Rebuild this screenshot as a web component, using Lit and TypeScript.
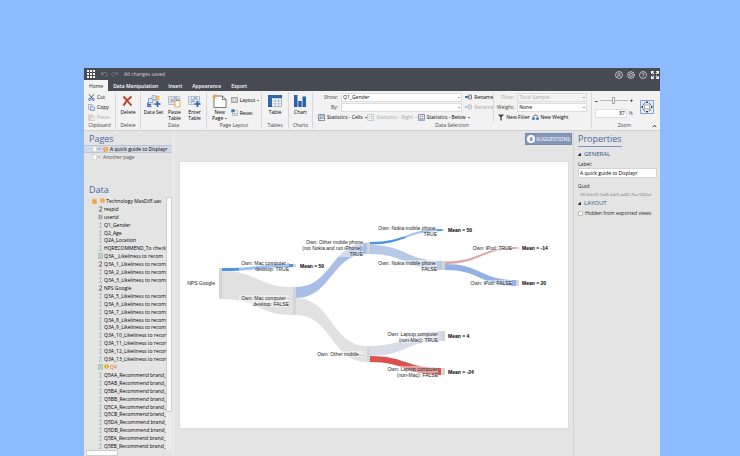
import { LitElement, html, css, svg, TemplateResult } from "lit";
import { customElement } from "lit/decorators.js";

const ic = (w: number, h: number, body: unknown) =>
  html`<svg width=${w} height=${h} viewBox="0 0 ${w} ${h}" aria-hidden="true">${body}</svg>`;

const plus = (x: number, y: number) =>
  svg`<path d="M${x} ${y - 3}v6M${x - 3} ${y}h6" stroke="#2660ab" stroke-width="1.6"/>`;
const gridBody = svg`<path d="M.5 1.500h11v8h-11z" fill="#eef1f5" stroke="#a3abb8" stroke-width=".7"/>
  <path d="M.5 4.200h11M.5 6.800h11M3.300 1.500v8M6 1.500v8M8.800 1.500v8" stroke="#a3abb8" stroke-width=".6"/>
  <path d="M3.500 4.500h2.300v2.200H3.500zM6.200 2h2.400v2H6.200z" fill="#8db0dc"/>`;

const icons = {
  apps: ic(8, 8, svg`<path d="M0 0h2v2H0zM3 0h2v2H3zM6 0h2v2H6zM0 3h2v2H0zM3 3h2v2H3zM6 3h2v2H6zM0 6h2v2H0zM3 6h2v2H3zM6 6h2v2H6z" fill="#fff"/>`),
  undo: ic(7, 6, svg`<path d="M.7 1v2.300H3M.9 3.200C2 1 6.300.8 6.300 3.300 6.300 4.600 5.200 5.200 4 5.200" fill="none" stroke="#8d9199" stroke-width=".8"/>`),
  redo: ic(7, 6, svg`<path d="M6.300 1v2.300H4M6.100 3.200C5 1 .7.8.7 3.300.7 4.600 1.800 5.200 3 5.200" fill="none" stroke="#7b7f87" stroke-width=".8"/>`),
  user: ic(8, 8, svg`<circle cx="4" cy="4" r="3.500" fill="none" stroke="#d4d6da" stroke-width=".8"/><circle cx="4" cy="3.200" r="1.200" fill="none" stroke="#d4d6da" stroke-width=".7"/><path d="M2 6.200c.4-2 3.600-2 4 0" fill="none" stroke="#d4d6da" stroke-width=".8"/>`),
  gear: ic(8, 8, svg`<circle cx="4" cy="4" r="3.200" fill="none" stroke="#d4d6da" stroke-width="1.100" stroke-dasharray="1.600 .4"/><circle cx="4" cy="4" r="1.500" fill="none" stroke="#d4d6da" stroke-width=".8"/>`),
  help: ic(8, 8, svg`<circle cx="4" cy="4" r="3.500" fill="none" stroke="#d4d6da" stroke-width=".8"/><path d="M2.900 3.200c0-1.500 2.300-1.400 2.200 0C5.100 4 4 3.900 4 4.900M4 5.500v.8" fill="none" stroke="#d4d6da" stroke-width=".8"/>`),
  full: ic(8, 8, svg`<path d="M.5 2.800V.5h2.300M5.200.5h2.300v2.300M7.500 5.200v2.300H5.200M2.800 7.500H.5V5.200M.7.700l2.300 2.300M7.300.7L5 3M7.300 7.300L5 5M.7 7.300L3 5" fill="none" stroke="#fff" stroke-width="1.100"/>`),
  cut: ic(7, 7, svg`<path d="M1 .3l3.700 4.500M5.800.3L2.300 4.800" stroke="#444" stroke-width=".9"/><circle cx="1.700" cy="5.400" r="1.100" fill="none" stroke="#2f6db5" stroke-width=".9"/><circle cx="5.200" cy="5.400" r="1.100" fill="none" stroke="#2f6db5" stroke-width=".9"/>`),
  copy: ic(7, 7, svg`<path d="M.5.5h3l1 1v3.700h-4z" fill="#fff" stroke="#8a8f98" stroke-width=".7"/><path d="M2.500 2h2.700l1.200 1.200v3.400H2.500z" fill="#d3e2f5" stroke="#5483bd" stroke-width=".7"/>`),
  paste: ic(7, 7, svg`<path d="M.7 1h4v5.300h-4z" fill="#eddccb" stroke="#cbbba9" stroke-width=".7"/><path d="M3 3h3.300v3.600H3z" fill="#f7f7f7" stroke="#bbb" stroke-width=".6"/>`),
  del: ic(11, 12, svg`<path d="M1.500 1.500C4 4 7 8 9.500 10.500M9.500 1.500C6.500 3.500 3 7.500 1.500 10.500" fill="none" stroke="#c23a26" stroke-width="1.900"/>`),
  dataset: ic(14, 13, svg`<path d="M1.500 3.500h4.500v4H1.500z" fill="#dfe8f4" stroke="#6b93c6" stroke-width=".8"/><path d="M5 .6h4v4H5z" fill="#cddcf0" stroke="#8ba8cf" stroke-width=".7"/><path d="M9 1h3.500v4H9z" fill="#f0b95a"/><path d="M6 5.500h4v4H6z" fill="#e9edf3" stroke="#9aa5b5" stroke-width=".6"/><path d="M.8 12V7.500M.8 8.500l3.500 3.500M1 12l3-3" stroke="#2660ab" stroke-width="1.100"/>${plus(10.500, 9)}`),
  pasteTable: ic(13, 13, svg`${gridBody}<path d="M7 5.500h5v6.500H7z" fill="#fff" stroke="#e6a94c" stroke-width="1"/><path d="M8.300 4.700h2.400v1.300H8.300z" fill="#8a7b61"/>`),
  enterTable: ic(13, 13, svg`${gridBody}${plus(9.500, 9)}`),
  page: ic(15, 14, svg`<path d="M2 2h8.500L14 5.500v8H2z" fill="#fff" stroke="#555" stroke-width=".8"/><path d="M10.500 2v3.500H14" fill="none" stroke="#555" stroke-width=".8"/><path d="M2.500 0v5M0 2.500h5M.8.800l3.400 3.400M4.200.8L.8 4.200" stroke="#e9a43c" stroke-width=".8"/>`),
  layout: ic(7, 6, svg`<path d="M.4.400h6.200v5.200H.4z" fill="#fff" stroke="#777" stroke-width=".7"/><path d="M1 1.800h5M1.200 3.200h2M3.900 3.200h2M1.200 4.500h2M3.900 4.500h2" stroke="#8b98ab" stroke-width=".7"/>`),
  reset: ic(7, 7, svg`<path d="M1.500 1.500h5v5h-5z" fill="#fff" stroke="#999" stroke-width=".6"/><path d="M.3.300h3.400v3H.3z" fill="#3f76b9"/><path d="M2.500 4.800h3" stroke="#3f76b9" stroke-width=".8"/>`),
  table: ic(14, 12, svg`<path d="M.4.400h13.200v11.200H.4z" fill="#fff" stroke="#8494ab" stroke-width=".7"/><path d="M0 0h14v3.300H4V12H0z" fill="#2662a8"/><path d="M4 6h10M4 8.800h10M7.300 3v9M10.600 3v9" stroke="#9aa8bd" stroke-width=".7"/><path d="M0 3.300h4M0 6.200h4M0 9h4M4 0v3M7.300 0v3M10.600 0v3" stroke="#6c97cb" stroke-width=".4"/>`),
  chart: ic(12, 12, svg`<path d="M0 0h3.500v12H0zM4.300 6h3.400v6H4.300zM8.500 1.500H12V12H8.500z" fill="#2662b0"/>`),
  stat: ic(7, 7, svg`<path d="M.5.500h6v6h-6z" fill="#fff" stroke="#5a6472" stroke-width=".7"/><path d="M2 1h4v3.500H2z" fill="#a9c6ea"/><path d="M.5 4.600h6M2 .5v6" stroke="#7a8695" stroke-width=".6"/>`),
  statDim: ic(7, 7, svg`<path d="M.5.500h6v6h-6z" fill="#f7f8fa" stroke="#b6bbc4" stroke-width=".7"/><path d="M4.600 1v5.500M.5 2.500h6M.5 4.500h6" stroke="#c3cad5" stroke-width=".6"/>`),
  statBelow: ic(7, 7, svg`<path d="M.5.500h6v6h-6z" fill="#fff" stroke="#5a6472" stroke-width=".7"/><path d="M.5 4.600h6v1.900h-6z" fill="#a9c6ea"/><path d="M.5 2.500h6M.5 4.600h6M2.500.5v6M4.500.5v6" stroke="#8a96a6" stroke-width=".5"/>`),
  rename: ic(7, 6, svg`<path d="M0 2h3.500v2H0z" fill="#3a73bb"/><path d="M3.500.7h1M4 .7v4.600M3.500 5.300h1M5.200 1.200h1.300v3.600H5.200" fill="none" stroke="#444" stroke-width=".7"/>`),
  renameDim: ic(7, 6, svg`<path d="M0 2h3.500v2H0z" fill="#b3c8e4"/><path d="M3.500.7h1M4 .7v4.600M3.500 5.300h1M5.200 1.200h1.300v3.600H5.200" fill="none" stroke="#aaa" stroke-width=".7"/>`),
  filter: ic(6, 7, svg`<path d="M0 .5h6L3.700 3.200V7L2.300 6V3.200z" fill="#4a4a4a"/>`),
  weight: ic(7, 7, svg`<path d="M1 3C2 .4 5 .4 6 3" fill="none" stroke="#444" stroke-width=".8"/><path d="M.2 3.500h2.600v2.200H.2zM4.200 3.500h2.600v2.200H4.200z" fill="#2f6db5"/>`),
  fit: ic(14, 14, svg`<path d="M.5.500h13v13H.5z" fill="#e6effa" stroke="#7ea3d4"/><path d="M4.500 5h5v4h-5z" fill="#fff" stroke="#888" stroke-width=".7"/><path d="M7 1l1.600 2H5.400zM7 13l1.600-2H5.400zM1 7l2-1.600v3.200zM13 7l-2-1.600v3.200z" fill="#2b3442"/><path d="M3 5.200C3.300 4 4 3.300 5 3M9 3c1 .3 1.700 1 2 2.200M11 8.800C10.700 10 10 10.700 9 11M5 11C4 10.700 3.300 10 3 8.800" fill="none" stroke="#55606f" stroke-width=".9"/>`),
  db: ic(5, 6, svg`<path d="M.3 1v4c0 1.200 4.400 1.200 4.400 0V1z" fill="#f2a23a"/><ellipse cx="2.500" cy="1.100" rx="2.200" ry=".8" fill="#f8c480"/>`),
  warn: ic(5, 5, svg`<circle cx="2.500" cy="2.500" r="2.300" fill="#f0952a"/><path d="M2.500 1.200v1.400M2.500 3.200v.8" stroke="#fff" stroke-width=".8"/>`),
  doc: ic(9, 6, svg`<path d="M.9.300h2.500l1.200 1.200v4.200H.9z" fill="#fff" stroke="#b9b9b9" stroke-width=".5"/><path d="M6 2.500h2.400L7.200 3.900z" fill="#888"/>`),
  num: ic(5, 6, svg`<path d="M1.200 1.600C1.700.3 3.900.5 3.700 2 3.600 3 1.800 4 1.400 5.200h2.600" fill="none" stroke="#444" stroke-width=".8"/>`),
  id: ic(5, 6, svg`<path d="M.8 1.200h1.200v1.500H.8zM2.900 1.200h1.200v1.500H2.900zM.8 3.500h1.200V5H.8zM2.900 3.500h1.200V5H2.900z" fill="none" stroke="#777" stroke-width=".5"/>`),
  cat: ic(5, 6, svg`<circle cx="2.500" cy="1.100" r=".9" fill="#7fbb8a"/><circle cx="2.500" cy="3.100" r=".8" fill="#a9b4c2"/><path d="M1 5.200h3" stroke="#9ab3c4" stroke-width="1"/>`),
  multi: ic(5, 6, svg`<path d="M.3.400h4.400v5.200H.3z" fill="#d2e2d2" stroke="#86b48c" stroke-width=".6"/><path d="M1 1l3 4M4 1L1 5" stroke="#86a9a0" stroke-width=".6"/>`),
};

type Kind = "num" | "id" | "cat" | "multi";
const variables: [Kind, string][] = [
  ["num", "respid"], ["id", "userid"], ["cat", "Q1_Gender"], ["cat", "Q2_Age"], ["cat", "Q2A_Location"],
  ["cat", "HQRECOMMEND_To check"], ["multi", "Q3A__Likeliness to recom"],
  ["num", "Q3A_1_Likeliness to recom"], ["cat", "Q3A_2_Likeliness to recom"],
  ["cat", "Q3A_3_Likeliness to recom"], ["num", "NPS Google"],
  ...[5, 6, 7, 8, 9].map((n): [Kind, string] => ["cat", `Q3A_${n}_Likeliness to recom`]),
  ...[10, 11, 12, 13].map((n): [Kind, string] => ["cat", `Q3A_${n}_Likeliness to recor`]),
  ["multi", "Q4"],
  ...["AA", "AB", "BA", "BB", "CA", "CB", "DA", "DB", "EA", "EB"].map((n): [Kind, string] => ["cat", `Q5${n}_Recommend brand_`]),
];

/* Sankey links: x0, top0, bottom0, x1, top1, bottom1, colour */
const links: [number, number, number, number, number, number, string][] = [
  [42, 109, 137, 113, 125, 153, "#e1e1e1"],
  [42, 106, 109, 113, 102, 105, "#4d94e4"],
  [116, 136, 153, 187, 184, 200, "#e1e1e1"],
  [116, 125, 136, 187, 81, 92, "#a9bee6"],
  [190, 80, 82.500, 262, 67, 69, "#4d94e4"],
  [190, 83, 92, 262, 99, 108, "#b8c9e8"],
  [265, 99.500, 102, 336, 85, 87, "#e0a8a5"],
  [265, 102, 108, 336, 118, 124, "#93b2e3"],
  [190, 184, 194, 261, 169, 179, "#d7dce7"],
  [190, 194, 200, 261, 206, 213, "#d8534e"],
];
/* x, y, width, height */
const nodes = [
  [39, 106, 3, 31], [113, 102, 3, 3], [113, 125, 3, 28], [187, 80, 3, 12], [187, 184, 3, 16],
  [262, 67, 2, 2], [262, 99, 3, 9], [336, 85, 3, 2], [336, 118, 3, 6], [261, 169, 4, 10], [261, 206, 4, 7],
];
/* right edge, first centre line, box width, lines */
const nodeLabels: [number, number, number, string[]][] = [
  [35, 121, 0, ["NPS Google"]],
  [109, 101, 50, ["Own: Mac computer -", "desktop: TRUE"]],
  [109, 136, 50, ["Own: Mac computer -", "desktop: FALSE"]],
  [183, 80, 64, ["Own: Other mobile phone", "(not Nokia and not iPhone):", "TRUE"]],
  [183, 192, 48, ["Own: Other mobile..."]],
  [257, 66, 61, ["Own: Nokia mobile phone:", "TRUE"]],
  [257, 101, 61, ["Own: Nokia mobile phone:", "FALSE"]],
  [332, 86, 42, ["Own: iPod: TRUE"]],
  [332, 121, 44, ["Own: iPod: FALSE"]],
  [258, 172, 53, ["Own: Laptop computer", "(non-Mac): TRUE"]],
  [258, 207, 53, ["Own: Laptop computer", "(non-Mac): FALSE"]],
];
const means: [number, number, string][] = [
  [120, 104, "50"], [268, 68, "50"], [342, 86, "-14"], [342, 121, "20"], [268, 174, "4"], [268, 210, "-24"],
];

@customElement("sankey-chart")
export class SankeyChart extends LitElement {
  static styles = css`
    :host { display: block; background: #fff; box-shadow: 0 0 1px #bbb; }
    svg { display: block; width: 100%; }
    text { font: 5px "Liberation Sans", Arial, sans-serif; fill: #222; }
    .end { text-anchor: end; }
    .mean { font-weight: bold; fill: #000; }
    .halo { fill: #fff; fill-opacity: 0.45; }
    .node { fill: #d5d5d5; }
  `;
  render() {
    return html`<svg viewBox="0 0 388 266" role="img" aria-label="NPS Google by device ownership">
      ${links.map(([x0, a, b, x1, c, d, f]) => {
        const m = (x0 + x1) / 2;
        return svg`<path fill=${f} d="M${x0} ${a}C${m} ${a} ${m} ${c} ${x1} ${c}V${d}C${m} ${d} ${m} ${b} ${x0} ${b}z"/>`;
      })}
      ${nodes.map(([x, y, w, h]) => svg`<rect class="node" x=${x} y=${y} width=${w} height=${h}/>`)}
      ${nodeLabels.map(([x, y, w, lines]) => svg`
        <rect class="halo" x=${x - w} y=${y - 3} width=${w} height=${lines.length * 6}/>
        ${lines.map((t, i) => svg`<text class="end" x=${x} y=${y + 2 + i * 6}>${t}</text>`)}`)}
      ${means.map(([x, y, t]) => svg`<text class="mean" x=${x} y=${y + 2}>Mean = ${t}</text>`)}
    </svg>`;
  }
}

@customElement("app-root")
export class AppRoot extends LitElement {
  static styles = css`
    :host { display: block; box-sizing: border-box; min-height: 100vh; padding: 68px 80px 0 84px; background: #8cbcff;
      font: 5px/6px "Open Sans", sans-serif; color: #000; }
    * { box-sizing: border-box; }
    svg { display: block; flex: none; }
    button, input, select { font: inherit; color: inherit; margin: 0; padding: 0; border: 0; background: none; border-radius: 0; min-width: 0; }
    button { display: flex; align-items: center; gap: 2px; white-space: nowrap; text-align: left; }
    h2, h3, ul { margin: 0; padding: 0; font-weight: normal; list-style: none; }
    .window { display: flex; flex-direction: column; min-height: calc(100vh - 68px); background: #e4e4e4; }
    .bar { display: flex; align-items: center; height: 12px; padding: 0 1px 0 3px; background: #464a53; color: #d0d2d6; }
    .bar .history { display: flex; gap: 3px; margin: 0 6px; }
    .bar .tools { display: flex; gap: 4px; margin-left: auto; padding-top: 2px; }
    .tabs { display: flex; height: 11px; background: #464a53; color: #fff; font-weight: 600; }
    .tabs button { padding: 0 5px; }
    .tabs .on { background: #f4f4f4; color: #222; font-weight: 400; }
    .ribbon { display: flex; height: 40px; padding-right: 3px; background: #f2f2f2; border-bottom: 1px solid #d2d2d2; }
    .group { display: flex; flex-direction: column; flex: none; margin: 1px 0; border-right: 1px solid #d8d8d8; }
    .group .body { display: flex; flex: 1; justify-content: center; }
    .group .name { text-align: center; color: #444; height: 7px; }
    .stack { display: grid; grid-template-rows: repeat(3, 1fr); }
    .stack.two { grid-template-rows: repeat(2, 13px); padding-top: 1px; }
    .big { flex-direction: column; gap: 1px; padding-top: 2px; text-align: center; white-space: normal; }
    .big .pic { display: flex; align-items: center; height: 14px; }
    .dim { color: #aaa; }
    .clip { width: 32px; } .clip .body { justify-content: flex-start; padding-left: 4px; }
    .delete { width: 25px; }
    .data { width: 66px; } .data .big { width: 20px; } .data .big:first-child { width: 22px; }
    .layouts { width: 55px; } .layouts .big { width: 22px; }
    .tables { width: 27px; } .charts { width: 24px; }
    .selection { flex: 1; min-width: 0; }
    .selection .body { padding-right: 4px; }
    .left { flex: 181; } .right { flex: 93; border-left: 1px solid #dadada; }
    .left, .right { display: grid; grid-template-rows: repeat(3, 1fr); min-width: 0; }
    .line { display: flex; align-items: center; gap: 3px; min-width: 0; }
    .line label { width: 25px; text-align: right; color: #444; flex: none; }
    .right .line label { width: 20px; }
    .line label.dim { color: #aaa; }
    .stats { justify-content: space-between; padding: 0 26px 0 5px; }
    .right .stats { padding: 0 20px 0 4px; }
    .pick { position: relative; flex: 1; display: flex; height: 9px; border: 1px solid #ddd; background: #fff; min-width: 0; }
    .pick.off { background: #f4f4f4; color: #aaa; }
    .pick select { appearance: none; flex: 1; padding-left: 1px; line-height: 7px; opacity: 1; }
    .caret::after { content: ""; display: inline-block; margin-left: 2px; vertical-align: middle; border: 1px solid transparent; border-top-color: currentColor; border-bottom: 0; }
    .pick::after { content: ""; position: absolute; right: 1px; top: 3px; border: 1px solid transparent; border-top-color: #444; border-bottom: 0; }
    .rename { width: 28px; }
    .zoom { width: 65px; border-right: 0; }
    .zoom .body { gap: 7px; align-items: center; }
    .zoom .name { display: flex; justify-content: center; position: relative; }
    .collapse { position: absolute; right: 0; top: 2px; }
    .dial { display: flex; flex-direction: column; gap: 4px; width: 38px; }
    .slide, .pct { display: flex; align-items: center; gap: 2px; }
    .slide { font-weight: 800; }
    .pct { color: #555; }
    .pct input { flex: 1; height: 9px; background: #fff; border: 1px solid #ddd; text-align: right; color: #000; padding-right: 1px; }
    .slide input { appearance: none; flex: 1; height: 8px; background: linear-gradient(#bbb, #bbb) center / 100% 1px no-repeat; }
    .slide input::-webkit-slider-thumb { appearance: none; width: 3px; height: 7px; background: #f4f4f4; border: 1px solid #aaa; }
    .work { display: flex; flex: 1; }
    .side { display: flex; flex-direction: column; width: 91px; border-right: 1px solid #d2d2d2; }
    h2 { font-size: 9px; line-height: 13px; color: #45689c; }
    .side h2 { padding-left: 5px; }
    .pages { display: flex; flex-direction: column; height: 52px; padding-top: 1px; }
    .pages button { width: 88px; height: 8px; padding-left: 8px; }
    .pages .on { background: #d3d9e4; border: 1px solid #bcc5d3; border-width: 1px 0; }
    .pages .plain { color: #555; }
    .tree { display: flex; flex: 1; padding-right: 2px; margin-top: 1px; }
    .tree ul { flex: 1; display: grid; grid-auto-rows: 1fr; min-width: 0; padding-left: 14px; }
    .tree li { display: flex; min-width: 0; min-height: 0; }
    .tree button { gap: 1px; }
    .tree li.root { margin-left: -6px; }
    .tree li.flag { color: #ee8022; font-weight: 600; }
    .track { width: 6px; background: #ececec; }
    .thumb { height: 85%; background: #fff; border: 1px solid #ccc; }
    .hscroll { width: 32px; height: 6px; margin-left: 2px; background: #fff; border: 1px solid #ccc; }
    .main { flex: 1; min-width: 0; padding: 2px 5px 0 5px; border-left: 3px solid #e9e9e9; margin-left: -3px; }
    .suggest { margin: 0 -4px 17px auto; height: 12px; gap: 1px; padding: 0 1px; background: #8598b9; color: #fff; border: 1px solid #788cae; }
    .count { width: 8px; height: 8px; border-radius: 50%; background: #fff; color: #45689c; text-align: center; line-height: 8px; font-weight: 700; }
    .props { width: 87px; padding: 1px 3px 0 4px; border-left: 1px solid #d2d2d2; display: flex; flex-direction: column; align-items: flex-start; }
    .props h2 { line-height: 14px; border-bottom: 1px solid #7d95ba; }
    .props h3 { display: flex; align-items: center; gap: 3px; font-size: 6px; line-height: 8px; color: #2d5596; margin-top: 3px; }
    .props h3::before { content: ""; border: 2px solid transparent; border-right-color: #333; border-bottom-color: #333; border-left-width: 1px; border-top-width: 1px; }
    .props label { color: #222; line-height: 8px; margin-top: 2px; }
    .props .text { width: 100%; height: 10px; background: #fff; border: 1px solid #d6d6d6; padding-left: 1px; }
    .guid { width: 100%; height: 8px; padding-left: 2px; font-size: 4px; color: #777; }
    .props .guidlabel { margin-top: 4px; }
    .props h3.second { margin-top: 1px; }
    .props .check { display: flex; align-items: center; gap: 2px; }
    .check input { appearance: none; width: 5px; height: 5px; background: #fff; border: 1px solid #bbb; border-radius: 1px; }
  `;

  private btn(icon: TemplateResult, text: string, cls = "", caret = false) {
    return html`<button class=${cls}>${icon}<span class=${caret ? "caret" : ""}>${text}</span></button>`;
  }
  private big(icon: TemplateResult, text: string, caret = false) {
    return html`<button class="big"><span class="pic">${icon}</span><span class=${caret ? "caret" : ""}>${text}</span></button>`;
  }
  private pick(id: string, label: string, value: string, off = false) {
    return html`<label for=${id} class=${off ? "dim" : ""}>${label}</label>
      <span class="pick ${off ? "off" : ""}"><select id=${id}><option>${value}</option></select></span>`;
  }

  render() {
    return html`<div class="window">
      <header>
        <div class="bar">
          <button aria-label="Apps">${icons.apps}</button>
          <span class="history"><button aria-label="Undo">${icons.undo}</button><button aria-label="Redo">${icons.redo}</button></span>
          <span>All changes saved</span>
          <span class="tools"><button aria-label="Account">${icons.user}</button><button aria-label="Settings">${icons.gear}</button>
            <button aria-label="Help">${icons.help}</button><button aria-label="Full screen">${icons.full}</button></span>
        </div>
        <nav class="tabs">
          <button class="on">Home</button><button>Data Manipulation</button><button>Insert</button><button>Appearance</button><button>Export</button>
        </nav>
        <div class="ribbon">
          <section class="group clip"><div class="body"><div class="stack">
            ${this.btn(icons.cut, "Cut")}${this.btn(icons.copy, "Copy")}${this.btn(icons.paste, "Paste", "dim")}</div></div>
            <div class="name">Clipboard</div></section>
          <section class="group delete"><div class="body">${this.big(icons.del, "Delete")}</div><div class="name">Delete</div></section>
          <section class="group data"><div class="body">${this.big(icons.dataset, "Data Set")}${this.big(icons.pasteTable, "Paste Table")}${this.big(icons.enterTable, "Enter Table")}</div>
            <div class="name">Data</div></section>
          <section class="group layouts"><div class="body">${this.big(icons.page, "New Page", true)}
            <div class="stack two">${this.btn(icons.layout, "Layout", "", true)}${this.btn(icons.reset, "Reset")}</div></div>
            <div class="name">Page Layout</div></section>
          <section class="group tables"><div class="body">${this.big(icons.table, "Table")}</div><div class="name">Tables</div></section>
          <section class="group charts"><div class="body">${this.big(icons.chart, "Chart")}</div><div class="name">Charts</div></section>
          <section class="group selection"><div class="body">
            <div class="left">
              <div class="line">${this.pick("show", "Show:", "Q1_Gender")}${this.btn(icons.rename, "Rename", "rename")}</div>
              <div class="line">${this.pick("by", "By:", "")}${this.btn(icons.renameDim, "Rename", "rename dim")}</div>
              <div class="line stats">${this.btn(icons.stat, "Statistics - Cells", "", true)}${this.btn(icons.statDim, "Statistics - Right", "dim", true)}${this.btn(icons.statBelow, "Statistics - Below", "", true)}</div>
            </div>
            <div class="right">
              <div class="line">${this.pick("filter", "Filter:", "Total Sample", true)}</div>
              <div class="line">${this.pick("weight", "Weight:", "None")}</div>
              <div class="line stats">${this.btn(icons.filter, "New Filter")}${this.btn(icons.weight, "New Weight")}</div>
            </div></div>
            <div class="name">Data Selection</div></section>
          <section class="group zoom"><div class="body">
            <div class="dial">
              <div class="slide"><span>−</span><input type="range" aria-label="Zoom level" value="50"><span>+</span></div>
              <div class="pct"><input aria-label="Zoom percent" value="87"><span>%</span></div>
            </div>
            <button aria-label="Fit to window">${icons.fit}</button></div>
            <div class="name">Zoom<button class="collapse" aria-label="Collapse ribbon">${ic(5, 4, svg`<path d="M.8 3.200l1.700-2 1.700 2" fill="none" stroke="#333" stroke-width="1"/>`)}</button></div></section>
        </div>
      </header>
      <div class="work">
        <aside class="side">
          <section class="pages"><h2>Pages</h2>
            <button class="on">${icons.doc}${icons.warn}<span>A quick guide to Displayr</span></button>
            <button class="plain">${icons.doc}<span>Another page</span></button></section>
          <h2>Data</h2>
          <div class="tree">
            <ul>
              <li class="root"><button>${icons.db}&nbsp;${icons.warn}<span>Technology MaxDiff.sav</span></button></li>
              ${variables.map(([k, n]) => html`<li class=${n === "Q4" ? "flag" : ""}><button>${icons[k]}${n === "Q4" ? icons.warn : ""}<span>${n}</span></button></li>`)}
            </ul>
            <div class="track"><div class="thumb"></div></div>
          </div>
          <div class="hscroll"></div>
        </aside>
        <main class="main">
          <button class="suggest"><span class="count">6</span><span>SUGGESTIONS</span></button>
          <sankey-chart></sankey-chart>
        </main>
        <aside class="props">
          <h2>Properties</h2>
          <h3>GENERAL</h3>
          <label for="label">Label:</label>
          <input id="label" class="text" value="A quick guide to Displayr">
          <label for="guid" class="guidlabel">Guid:</label>
          <input id="guid" class="guid" readonly value="2610cb29-7ad9-4cb9-ad40-7ba1302a4">
          <h3 class="second">LAYOUT</h3>
          <label class="check"><input type="checkbox">Hidden from exported views</label>
        </aside>
      </div>
    </div>`;
  }
}
